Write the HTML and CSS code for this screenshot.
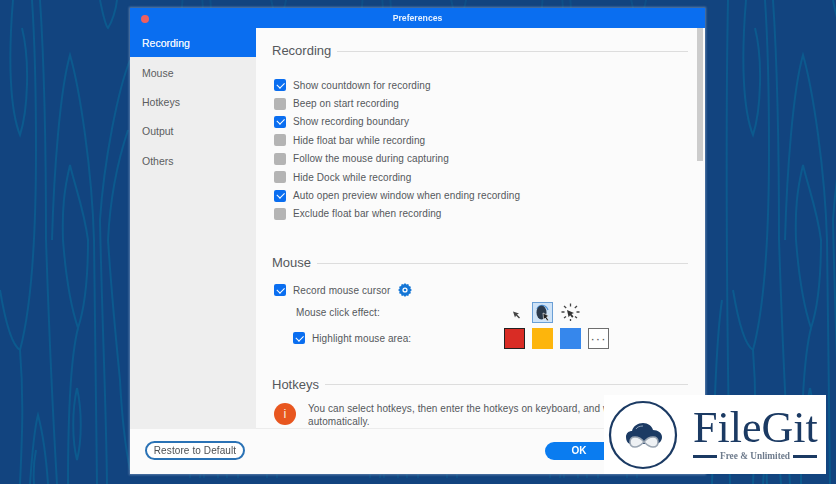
FILE: index.html
```html
<!DOCTYPE html>
<html lang="en">
<head>
<meta charset="utf-8">
<title>Preferences</title>
<link rel="stylesheet" href="styles.css">
</head>
<body>
<svg class="wall" viewBox="0 0 836 484" aria-hidden="true">
  <defs>
    <g id="grain" fill="none" stroke="#0c5a8e" stroke-width="2">
      <path d="M13 0C8 60 10 110 20 135C28 110 30 60 22 28"/>
      <path d="M0 290C5 320 12 345 20 350C28 320 36 260 36 150C36 80 34 30 32 0"/>
      <path d="M40 0C44 60 46 150 46 240C48 300 52 400 57 484"/>
      <path d="M20 350C24 400 22 440 20 484"/>
      <path d="M52 240C54 170 60 90 70 55C80 90 92 170 94 240C95 320 96 400 97 484"/>
      <path d="M63 240C62 210 64 190 70 165C76 190 84 210 88 240C88 280 84 310 78 328C72 310 66 280 63 240"/>
      <path d="M78 328C70 360 68 420 68 484"/>
      <path d="M77 388C72 410 72 440 77 460C82 440 82 410 77 388"/>
      <path d="M30 484C32 455 34 430 38 415C42 430 46 455 48 484"/>
      <path d="M34 484C33 470 34 460 36 450"/>
      <path d="M130 60C118 90 104 160 100 220C102 320 106 400 107 484"/>
      <path d="M128 130C118 160 110 200 108 240C112 300 118 360 120 380C122 420 126 450 130 470"/>
      <path d="M100 0C103 15 106 26 108 28C112 22 116 10 117 0"/>
    </g>
  </defs>
  <use href="#grain"/>
  <use href="#grain" x="733"/>
  <path class="grain-extra" d="M728 0C726 100 726 300 730 484"/>
  <path class="grain-extra" d="M712 484C714 420 716 340 722 300"/>
  <use href="#grain" x="170" y="-6" opacity=".55"/>
  <use href="#grain" x="350" y="-6" opacity=".55"/>
  <use href="#grain" x="530" y="-6" opacity=".55"/>
</svg>

<main class="window">
  <header class="titlebar">
    <span class="close"></span>
    <span class="title">Preferences</span>
  </header>
  <div class="body">
    <nav class="sidebar">
      <a class="nav-item active">Recording</a>
      <a class="nav-item">Mouse</a>
      <a class="nav-item">Hotkeys</a>
      <a class="nav-item">Output</a>
      <a class="nav-item">Others</a>
    </nav>
    <div class="content">
      <div class="scroll">
        <section class="sec-recording">
          <h2 class="heading"><span>Recording</span></h2>
          <ul class="checks">
            <li class="row"><span class="cb on"></span>Show countdown for recording</li>
            <li class="row"><span class="cb"></span>Beep on start recording</li>
            <li class="row"><span class="cb on"></span>Show recording boundary</li>
            <li class="row"><span class="cb"></span>Hide float bar while recording</li>
            <li class="row"><span class="cb"></span>Follow the mouse during capturing</li>
            <li class="row"><span class="cb"></span>Hide Dock while recording</li>
            <li class="row"><span class="cb on"></span>Auto open preview window when ending recording</li>
            <li class="row"><span class="cb"></span>Exclude float bar when recording</li>
          </ul>
        </section>
        <section class="sec-mouse">
          <h2 class="heading"><span>Mouse</span></h2>
          <div class="row record">
            <span class="cb on"></span>Record mouse cursor
            <svg class="gear" viewBox="0 0 14 14"><path fill="#1476d6" d="M7 0l1.3 1.6 2-.5.6 2 2 .6-.5 2L14 7l-1.6 1.3.5 2-2 .6-.6 2-2-.5L7 14l-1.3-1.6-2 .5-.6-2-2-.6.5-2L0 7l1.6-1.3-.5-2 2-.6.6-2 2 .5z"/><circle cx="7" cy="7" r="2.6" fill="#fff"/><circle cx="7" cy="7" r="1.300" fill="#1476d6"/></svg>
          </div>
          <div class="opt effect">
            <span class="opt-label">Mouse click effect:</span>
            <div class="opt-tools">
              <span class="tool">
                <svg viewBox="0 0 21 21" width="21" height="21"><path fill="#444" d="M9 9.500l6 2-2 1 3 3-1 1-3-3-1 2z"/></svg>
              </span>
              <span class="tool selected">
                <svg viewBox="0 0 21 21" width="21" height="21"><path fill="none" stroke="#4f93d8" stroke-width="1.200" d="M5 7C7 2 14 2 16 8"/><ellipse cx="9.500" cy="10.500" rx="5" ry="7" fill="#2b3a4c"/><path fill="#222" stroke="#fff" stroke-width=".6" d="M11 11l6 3-2.400 1 2 3-1.400 1-2-3-1.600 1.600z"/></svg>
              </span>
              <span class="tool">
                <svg viewBox="0 0 21 21" width="21" height="21"><g stroke="#444" stroke-width="1.300" fill="none"><path d="M10.500 1.500v3M4 4l2.200 2M17 4l-2.200 2M19.500 10h-3M1.500 10h3M4 16l2-1.500M10.500 19v-2M17 16l-2-1.500"/></g><path fill="#333" d="M7 8l7 3-2.500 1 2 2.500-1.400 1.200-2-2.500-1.500 2z"/></svg>
              </span>
            </div>
          </div>
          <div class="opt highlight">
            <span class="opt-label"><span class="cb on"></span>Highlight mouse area:</span>
            <div class="opt-tools">
              <span class="swatch red"></span>
              <span class="swatch amber"></span>
              <span class="swatch blue"></span>
              <span class="swatch more">&middot;&middot;&middot;</span>
            </div>
          </div>
        </section>
        <section class="sec-hotkeys">
          <h2 class="heading"><span>Hotkeys</span></h2>
          <div class="notice">
            <span class="info">i</span>
            <p>You can select hotkeys, then enter the hotkeys on keyboard, and we will save them<br>automatically.</p>
          </div>
        </section>
      </div>
      <div class="track"><span class="thumb"></span></div>
    </div>
  </div>
  <footer class="footer">
    <button class="restore">Restore to Default</button>
    <button class="ok">OK</button>
  </footer>
</main>

<aside class="badge">
  <svg class="badge-mark" viewBox="0 0 70 70" width="70" height="70">
    <circle cx="35" cy="35" r="33" fill="#fff" stroke="#1b3a63" stroke-width="2.200"/>
    <path fill="#1b3a63" d="M22 44C19 43 18 40 18 37C18 33 21 31 24 31C25 26 30 23 35 23C40 23 44 26 45 30C50 30 54 33 54 37C54 41 51 44 48 44Z"/>
    <path fill="none" stroke="#8ea2ba" stroke-width="1" d="M28 29c1-2 4-3 7-3"/>
    <path fill="#eef1f4" stroke="#9aa5b2" stroke-width="1.500" d="M36 42C33 38 30 37 27 37C24 37 22 39 22 42C22 45 24 47 27 47C30 47 33 45 36 42C39 38 42 37 45 37C48 37 50 39 50 42C50 45 48 47 45 47C42 47 39 45 36 42Z"/>
  </svg>
  <div class="badge-text">
    <span class="badge-name">FileGit</span>
    <span class="badge-sub"><i></i>Free &amp; Unlimited<i></i></span>
  </div>
</aside>
</body>
</html>
```
FILE: styles.css
```css
* { box-sizing: border-box; }
html, body { margin: 0; height: 100%; }
body {
  width: 836px;
  height: 484px;
  overflow: hidden;
  background: #12447f;
  font-family: "Liberation Sans", Arial, sans-serif;
  color: #55585c;
  padding: 8px 0 0 130px;
  position: relative;
}
.wall { position: absolute; left: 0; top: 0; width: 836px; height: 484px; filter: blur(.6px); }
.grain-extra { fill: none; stroke: #0c5a8e; stroke-width: 2; }

.window {
  position: relative;
  width: 575px;
  height: 466px;
  display: flex;
  flex-direction: column;
  background: #fbfbfb;
  box-shadow: 0 0 2px 1px rgba(120, 150, 190, .7);
  filter: blur(.35px);
}
.titlebar {
  height: 20px;
  flex: none;
  display: flex;
  align-items: center;
  justify-content: center;
  background: #0a6ef0;
  position: relative;
}
.close {
  position: absolute;
  left: 11px;
  top: 7px;
  width: 8px;
  height: 8px;
  border-radius: 50%;
  background: #ee5f5f;
}
.title { color: #e8f1fd; font-size: 8.7px; font-weight: bold; }

.body { flex: 1; display: flex; min-height: 0; }
.sidebar { width: 126px; flex: none; background: #eeeeee; }
.nav-item {
  display: flex;
  align-items: center;
  height: 29.4px;
  padding: 1px 0 0 12px;
  font-size: 10.5px;
  color: #5b5d60;
}
.nav-item.active { background: #0a6ef0; color: #e6f1fe; text-shadow: 0 0 .6px #e6f1fe; }

.content { flex: 1; display: flex; min-width: 0; background: #fbfbfb; border-bottom: 1px solid #ececec; }
.scroll { flex: 1; overflow: hidden; padding: 15px 8px 0 16px; min-width: 0; }
.track { width: 9px; flex: none; padding: 0 2px 0 1px; }
.thumb { display: block; width: 6px; height: 133px; background: #cccccc; }

.heading {
  display: flex;
  align-items: center;
  gap: 6px;
  margin: 0;
  font-size: 13px;
  font-weight: normal;
  line-height: 16px;
  color: #55585c;
}
.heading::after { content: ""; flex: 1; height: 1px; background: #dddddd; }
.checks { list-style: none; margin: 17px 0 0; padding: 0; }
.row {
  display: flex;
  align-items: center;
  height: 18.4px;
  padding-left: 2px;
  font-size: 10px;
  letter-spacing: .09px;
}
.cb {
  position: relative;
  flex: none;
  width: 12px;
  height: 12px;
  margin-right: 7px;
  border-radius: 2px;
  background: #b4b4b4;
}
.cb.on { background: #0a6ef0; }
.cb.on::after {
  content: "";
  position: absolute;
  left: 3px;
  top: 2.5px;
  width: 6px;
  height: 3.5px;
  border-left: 1.8px solid #fff;
  border-bottom: 1.8px solid #fff;
  transform: rotate(-45deg);
}

.sec-mouse { margin-top: 32px; }
.record { margin-top: 10px; }
.gear { width: 14px; height: 14px; margin-left: 7.5px; }
.opt { display: flex; align-items: center; font-size: 10px; letter-spacing: .09px; }
.opt-label { display: flex; align-items: center; flex: none; }
.opt-tools { display: flex; align-items: center; gap: 7px; }
.effect { height: 21px; margin-top: 2px; padding-left: 24px; }
.effect .opt-label { width: 208px; }
.highlight { height: 21px; margin-top: 5px; padding-left: 21px; }
.highlight .opt-label { width: 211px; }
.tool { width: 21px; height: 21px; display: flex; border: 1px solid transparent; }
.tool svg { margin: -1px; flex: none; }
.tool.selected { background: #cfe3f7; border-color: #6a9fd6; }
.swatch { width: 21px; height: 21px; display: flex; align-items: center; justify-content: center; }
.red { background: #d92c25; border: 1px solid #222; }
.amber { background: #fdb50c; }
.blue { background: #3687ec; }
.more { background: #fff; border: 1px solid #6e6e6e; color: #555; font-size: 13px; letter-spacing: 1px; }

.sec-hotkeys { margin-top: 28px; }
.notice { display: flex; gap: 12px; margin-top: 9px; padding-left: 2px; }
.info {
  flex: none;
  width: 22px;
  height: 22px;
  margin-top: 1.5px;
  border-radius: 50%;
  background: #e8561f;
  color: #f8e6dc;
  font-size: 13px;
  line-height: 22px;
  text-align: center;
}
.notice p { margin: 0; font-size: 10px; line-height: 13px; letter-spacing: .09px; white-space: nowrap; }

.footer {
  height: 45px;
  flex: none;
  display: flex;
  align-items: center;
  justify-content: space-between;
  padding: 0 15px 2px;
  background: #fbfbfb;
}
button { font-family: inherit; cursor: default; }
.restore {
  width: 100px;
  height: 19px;
  padding: 0;
  border: 2px solid #2a72b5;
  border-radius: 10px;
  background: #fff;
  color: #4c4f52;
  font-size: 10px;
  letter-spacing: .1px;
}
.ok {
  width: 68px;
  height: 18px;
  margin-right: 77px;
  padding: 0;
  border: 0;
  border-radius: 9px;
  background: #0a7cf0;
  color: #fff;
  font-size: 10px;
  font-weight: bold;
}

.badge {
  position: absolute;
  left: 604px;
  top: 395px;
  width: 222px;
  height: 79px;
  display: flex;
  align-items: center;
  gap: 15px;
  padding-left: 4px;
  background: #fff;
  color: #1b3a63;
  filter: blur(.3px);
}
.badge-text { display: flex; flex-direction: column; width: 124px; margin-top: -2px; }
.badge-name {
  font-family: "Liberation Serif", "Times New Roman", serif;
  font-size: 44px;
  line-height: 44px;
  white-space: nowrap;
}
.badge-sub {
  display: flex;
  align-items: center;
  justify-content: space-between;
  margin-top: 1px;
  font-family: "Liberation Serif", "Times New Roman", serif;
  font-size: 9.3px;
  font-weight: bold;
  color: #6e7b8c;
  white-space: nowrap;
}
.badge-sub i { flex: 1; height: 3px; background: #1b3a63; }
.badge-sub i:first-child { margin-right: 3px; }
.badge-sub i:last-child { margin-left: 3px; }
```
